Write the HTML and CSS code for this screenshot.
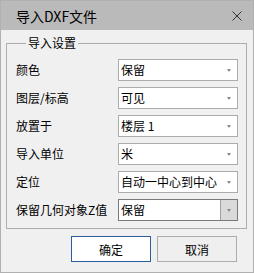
FILE: index.html
```html
<!DOCTYPE html>
<html lang="zh-CN">
    <head>
        <meta charset="utf-8">
        <title>导入DXF文件</title>
        <link rel="stylesheet" href="styles.css">
    </head>
    <body>
        <div class="dialog">
            <div class="titlebar">
                <span class="title">导入DXF文件</span>
                <svg class="close" width="10" height="10" viewBox="0 0 10 10">
                    <path d="M0.5 0.5 L9.5 9.5 M9.5 0.5 L0.5 9.5" stroke="#333" stroke-width="1" fill="none"/>
                </svg>
            </div>

            <fieldset class="group">
                <legend>导入设置</legend>

                <div class="row">
                    <span class="label">颜色</span>
                    <div class="select"><span>保留</span><span class="arrow"></span></div>
                </div>
                <div class="row">
                    <span class="label">图层/标高</span>
                    <div class="select"><span>可见</span><span class="arrow"></span></div>
                </div>
                <div class="row">
                    <span class="label">放置于</span>
                    <div class="select"><span>楼层 1</span><span class="arrow"></span></div>
                </div>
                <div class="row">
                    <span class="label">导入单位</span>
                    <div class="select"><span>米</span><span class="arrow"></span></div>
                </div>
                <div class="row">
                    <span class="label">定位</span>
                    <div class="select"><span>自动一中心到中心</span><span class="arrow"></span></div>
                </div>
                <div class="row">
                    <span class="label">保留几何对象Z值</span>
                    <div class="select active"><span>保留</span><span class="arrow"></span></div>
                </div>
            </fieldset>

            <div class="buttons">
                <button type="button" class="btn primary">确定</button>
                <button type="button" class="btn">取消</button>
            </div>
        </div>
    </body>
</html>
```

FILE: styles.css
```css
body {
    margin: 0;
    padding: 0;
    font-family: "Noto Sans CJK SC", "Noto Sans", sans-serif;
    font-size: 12px;
    color: #000;
}

.dialog {
    box-sizing: border-box;
    width: 254px;
    height: 273px;
    border: 1px solid #b0b0b0;
    background-color: #f0f0f0;
}

.titlebar {
    display: flex;
    align-items: center;
    justify-content: space-between;
    height: 29px;
    padding: 0 11px 0 15px;
    background-color: #bababa;
}

.title {
    font-size: 14px;
    line-height: 16px;
}

.group {
    margin: 5px 6px 0 5px;
    padding: 8px 8px 7px 9px;
    border: 1px solid #adadad;
    display: flex;
    flex-direction: column;
    gap: 6px;
}

.group legend {
    margin-left: 10px;
    padding: 0 2px;
    line-height: 16px;
}

.row {
    display: flex;
    align-items: center;
    justify-content: space-between;
    height: 22px;
}

.label {
    line-height: 16px;
}

.select {
    box-sizing: border-box;
    display: flex;
    align-items: center;
    justify-content: space-between;
    width: 120px;
    height: 22px;
    padding-left: 2px;
    border: 1px solid #acacac;
    background-color: #fff;
    line-height: 16px;
}

.arrow {
    width: 16px;
    height: 20px;
    display: flex;
    align-items: center;
    justify-content: center;
}

.arrow::after {
    content: "";
    border-top: 3px solid #8a8a8a;
    border-left: 2.5px solid transparent;
    border-right: 2.5px solid transparent;
}

.select.active {
    border-color: #7a7a7a;
}

.select.active .arrow {
    border-left: 1px solid #a0a0a0;
    background-color: #dadada;
}

.buttons {
    display: flex;
    justify-content: flex-end;
    gap: 6px;
    margin-top: 7px;
    padding-right: 16px;
}

.btn {
    box-sizing: border-box;
    width: 80px;
    height: 26px;
    border: 1px solid #adadad;
    background-color: #efefef;
    font-family: inherit;
    font-size: 12px;
    color: #000;
    padding: 0;
}

.btn.primary {
    border-color: #2c5d9e;
    background-color: #fff;
}
```
